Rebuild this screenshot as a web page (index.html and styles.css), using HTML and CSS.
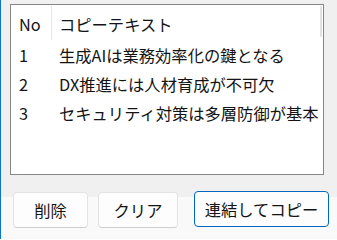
FILE: index.html
```html
<!DOCTYPE html>
<html lang="ja">
<head>
<meta charset="utf-8">
<link rel="stylesheet" href="styles.css">
</head>
<body>
<div class="window">
  <div class="listbox">
    <div class="row header">
      <div class="col-no">No</div>
      <div class="sep"></div>
      <div class="col-text">コピーテキスト</div>
    </div>
    <div class="row">
      <div class="col-no">1</div>
      <div class="col-text">生成AIは業務効率化の鍵となる</div>
    </div>
    <div class="row">
      <div class="col-no">2</div>
      <div class="col-text">DX推進には人材育成が不可欠</div>
    </div>
    <div class="row">
      <div class="col-no">3</div>
      <div class="col-text">セキュリティ対策は多層防御が基本</div>
    </div>
    <div class="scrollbar"></div>
  </div>
  <div class="buttons">
    <button class="btn btn-delete">削除</button>
    <button class="btn btn-clear">クリア</button>
    <button class="btn btn-copy default">連結してコピー</button>
  </div>
</div>
</body>
</html>
```
FILE: styles.css
```css
* { box-sizing: border-box; }
html, body { margin: 0; padding: 0; }
body {
  font-family: "Noto Sans CJK JP", "Noto Sans", sans-serif;
  color: #141414;
}
.window {
  width: 337px;
  height: 239px;
  border-left: 1px solid #0a74d0;
  background: linear-gradient(#f0f0f0 0, #f0f0f0 197px, #f9f9f9 197px);
  padding: 4px 0 0 9px;
  display: flex;
  flex-direction: column;
}
.listbox {
  position: relative;
  width: 314px;
  height: 171px;
  background: #ffffff;
  border: 1px solid #868686;
  display: flex;
  flex-direction: column;
}
.row {
  display: flex;
  align-items: center;
  height: 29px;
  font-size: 16.3px;
  line-height: 20px;
  white-space: nowrap;
}
.row.header {
  height: 35px;
  align-items: stretch;
  padding-top: 3px;
  padding-bottom: 1px;
}
.row.header .col-no,
.row.header .col-text {
  display: flex;
  align-items: center;
}
.col-no {
  width: 48px;
  padding-left: 8px;
  flex: none;
}
.sep {
  width: 1px;
  background: #e6e6e6;
  margin: -2px 0 -1px -8px;
  flex: none;
}
.header .col-text { padding-left: 7px; }
.col-text { padding-left: 0; }
.scrollbar {
  position: absolute;
  top: 1px;
  right: 1px;
  width: 2px;
  height: 31px;
  background: #e2e2e2;
  border-radius: 1px;
}
.buttons {
  display: flex;
  align-items: flex-start;
  margin-top: 17px;
  padding-left: 3px;
}
.btn {
  height: 36px;
  font-family: "Noto Sans CJK JP", "Noto Sans", sans-serif;
  font-size: 16.3px;
  color: #141414;
  background: #fdfdfd;
  border: 1px solid #e3e3e3;
  border-bottom-color: #cfcfcf;
  border-radius: 4px;
  padding: 0;
}
.btn-delete { width: 75px; }
.btn-clear { width: 80px; margin-left: 10px; }
.btn-copy { width: 135px; margin-left: 16px; margin-top: -1px; }
.btn.default {
  border: 1px solid #0067c0;
}
```
